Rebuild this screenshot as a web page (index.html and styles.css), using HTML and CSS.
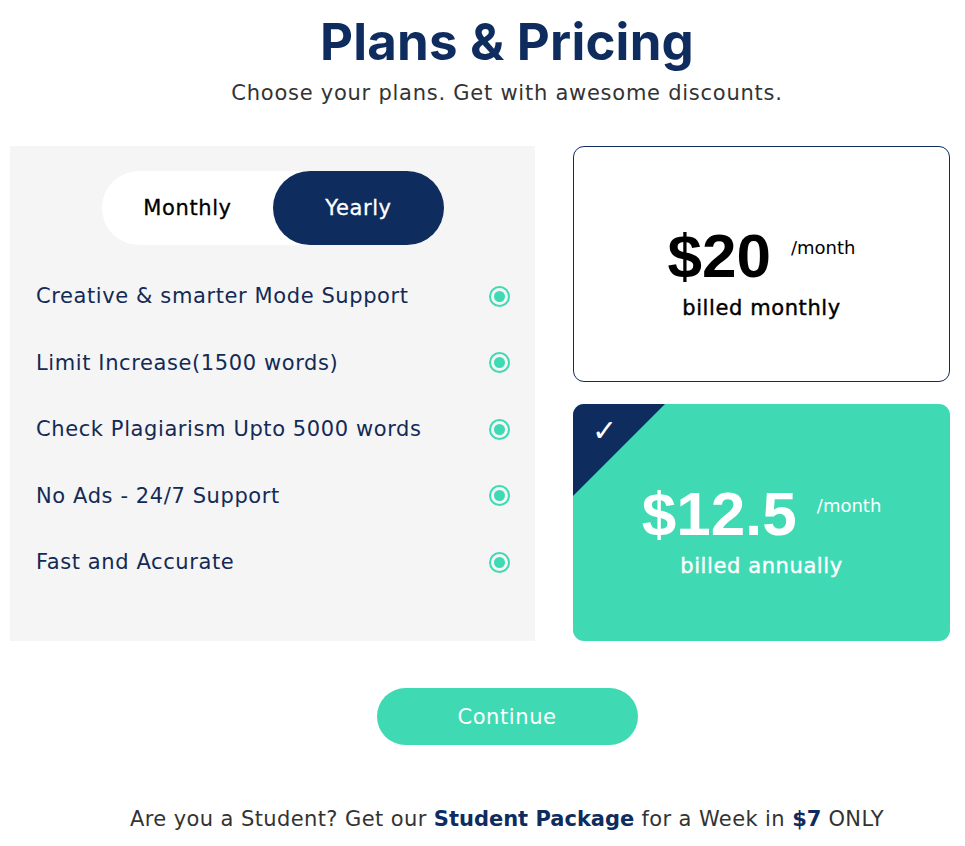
FILE: index.html
```html
<!DOCTYPE html>
<html>
<head>
<meta charset="utf-8">
<link rel="stylesheet" href="styles.css">
</head>
<body>
<div class="page">
  <header class="head">
    <h1 class="title">Plans &amp; Pricing</h1>
    <p class="subtitle">Choose your plans. Get with awesome discounts.</p>
  </header>

  <main class="plans">
    <section class="features">
      <div class="toggle">
        <span class="tab">Monthly</span>
        <span class="tab tab-active">Yearly</span>
      </div>
      <ul class="list">
        <li class="item"><span>Creative &amp; smarter Mode Support</span><i class="radio"></i></li>
        <li class="item"><span>Limit Increase(1500 words)</span><i class="radio"></i></li>
        <li class="item"><span>Check Plagiarism Upto 5000 words</span><i class="radio"></i></li>
        <li class="item"><span>No Ads - 24/7 Support</span><i class="radio"></i></li>
        <li class="item"><span>Fast and Accurate</span><i class="radio"></i></li>
      </ul>
    </section>

    <section class="cards">
      <div class="card card-outline">
        <div class="price-row">
          <span class="price">$20</span>
          <span class="per">/month</span>
        </div>
        <div class="billed">billed monthly</div>
      </div>
      <div class="card card-selected">
        <div class="corner"></div>
        <span class="check">✓</span>
        <div class="price-row">
          <span class="price">$12.5</span>
          <span class="per">/month</span>
        </div>
        <div class="billed">billed annually</div>
      </div>
    </section>
  </main>

  <div class="actions">
    <button class="continue">Continue</button>
  </div>

  <p class="student">Are you a Student? Get our <b>Student Package</b> for a Week in <b>$7</b> ONLY</p>
</div>
</body>
</html>
```

FILE: styles.css
```css
* { box-sizing: border-box; }
html, body { margin: 0; padding: 0; background: #fff; }
body {
  font-family: "DejaVu Sans", "Inter", sans-serif;
  color: #333;
  letter-spacing: 0.6px;
}
.page { width: 965px; }

.head {
  padding-left: 49px;
  text-align: center;
  padding-top: 12px;
}
.title {
  margin: 0;
  font-family: "Inter", sans-serif;
  font-size: 51px;
  line-height: 60px;
  font-weight: 700;
  color: #0f2c5f;
  letter-spacing: 0.2px;
}
.subtitle {
  margin: 8px 0 0;
  font-size: 21px;
  line-height: 26px;
  color: #333;
  letter-spacing: 0.75px;
}

.plans {
  display: flex;
  gap: 38px;
  margin: 40px 0 0 10px;
  width: 940px;
}
.features {
  width: 525px;
  height: 495px;
  background: #f5f5f5;
  padding: 25px 25px 0 26px;
}
.toggle {
  display: flex;
  width: 342px;
  height: 74px;
  margin: 0 auto;
  background: #fff;
  border-radius: 37px;
}
.tab {
  flex: 1;
  display: flex;
  align-items: center;
  justify-content: center;
  font-size: 21px;
  color: #000;
  border-radius: 37px;
  -webkit-text-stroke: 0.3px currentColor;
}
.tab-active { background: #0f2c5f; color: #fff; }

.list { list-style: none; margin: 18px 0 0; padding: 0; }
.item {
  display: flex;
  align-items: center;
  justify-content: space-between;
  height: 66.5px;
  font-size: 21px;
  color: #132a55;
}
.radio {
  width: 21px;
  height: 21px;
  border: 2.5px solid #3fdab3;
  border-radius: 50%;
  display: flex;
  align-items: center;
  justify-content: center;
}
.radio::after {
  content: "";
  width: 11px;
  height: 11px;
  border-radius: 50%;
  background: #3fdab3;
}

.cards {
  width: 377px;
  display: flex;
  flex-direction: column;
  gap: 22px;
}
.card {
  position: relative;
  height: 237px;
  border-radius: 11px;
  display: flex;
  flex-direction: column;
  align-items: center;
  justify-content: center;
  overflow: hidden;
  padding: 16px 0 4px;
}
.card-outline { border: 1px solid #0f2c5f; height: 236px; color: #000; }
.card-selected { background: #3fdab3; color: #fff; }
.price-row {
  display: flex;
  align-items: flex-start;
  gap: 20px;
}
.price {
  font-family: "Liberation Sans", Arial, sans-serif;
  font-weight: 700;
  font-size: 62px;
  line-height: 70px;
  letter-spacing: 0;
}
.per {
  font-size: 18px;
  letter-spacing: 0;
  margin-top: 16px;
}
.billed {
  font-size: 21px;
  margin-top: 5px;
  -webkit-text-stroke: 0.4px currentColor;
}
.corner {
  position: absolute;
  left: 0;
  top: 0;
  width: 92px;
  height: 92px;
  background: #0f2c5f;
  clip-path: polygon(0 0, 100% 0, 0 100%);
}
.check {
  position: absolute;
  left: 19px;
  top: 10px;
  font-size: 30px;
  line-height: 34px;
  font-family: "DejaVu Sans", sans-serif;
  color: #fff;
  font-weight: 700;
}

.actions {
  padding-left: 49px;
  display: flex;
  justify-content: center;
  margin-top: 47px;
}
.continue {
  width: 261px;
  height: 57px;
  border: none;
  border-radius: 29px;
  background: #3fdab3;
  color: #fff;
  font-family: "DejaVu Sans", sans-serif;
  letter-spacing: 0.6px;
  font-size: 21px;
}

.student {
  padding-left: 49px;
  text-align: center;
  margin: 61px 0 0;
  font-size: 21px;
  line-height: 26px;
  color: #333;
  letter-spacing: 0.4px;
}
.student b { color: #0f2c5f; font-weight: 700; letter-spacing: 0; }
```
